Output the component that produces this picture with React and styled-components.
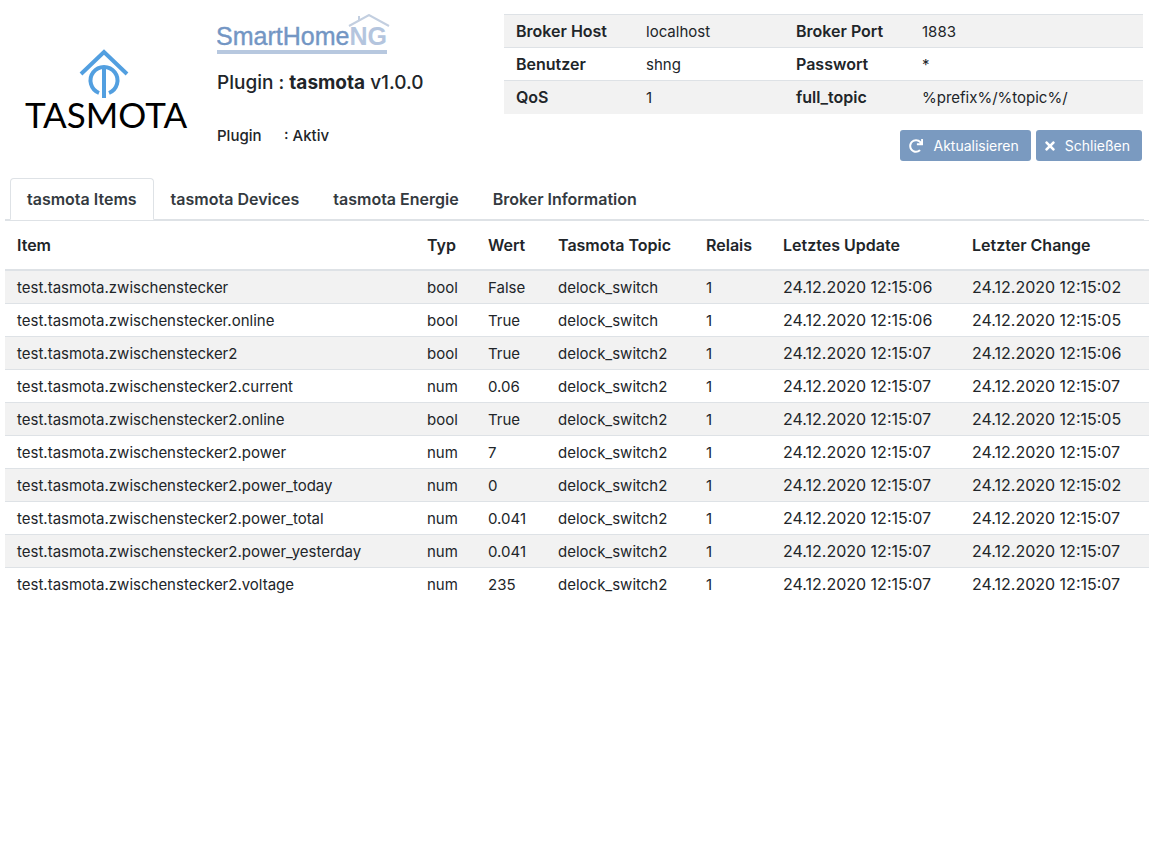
import React from "react";
import styled, { createGlobalStyle } from "styled-components";
import { FaRedo, FaTimes } from "react-icons/fa";

const GlobalStyle = createGlobalStyle`
  *, *::before, *::after { box-sizing: border-box; }
  body {
    margin: 0;
    background: #fff;
    color: #212529;
    font-family: Inter, "Liberation Sans", sans-serif;
    font-size: 15px;
    line-height: 24px;
  }
`;

const Header = styled.header`
  display: grid;
  grid-template-columns: 200px 287px minmax(0, 1fr);
  padding: 14px 9px 0 17px;
`;

const PluginLogo = styled.svg`
  display: block;
  width: 180px;
  height: 90px;
  margin-top: 32px;
`;

const BrandLogo = styled.svg`
  display: block;
  width: 180px;
  height: 44px;
`;

const Title = styled.h1`
  margin: 13px 0 0;
  font-size: 19px;
  line-height: 24px;
  font-weight: 500;
`;

const Status = styled.dl`
  display: flex;
  margin: 29px 0 0;
  font-weight: 500;
`;

const StatusLabel = styled.dt`
  width: 67px;
`;

const StatusValue = styled.dd`
  margin: 0;
`;

const Table = styled.table`
  width: 100%;
  table-layout: fixed;
  border-collapse: collapse;
  text-align: left;
`;

const Row = styled.tr`
  background: ${(p) => (p.$striped ? "#f2f2f2" : "#fff")};
`;

const Cell = styled.td`
  height: 33px;
  padding: 5px 12px 3px;
  border-top: 1px solid #dee2e6;
  white-space: nowrap;
`;

const DateCell = styled(Cell)`
  padding: 4px 12px;
  font-size: 16px;
`;

const LabelCell = styled(Cell)`
  padding: 4px 12px;
  font-size: 16px;
  font-weight: 600;
`;

const HeadCell = styled.th`
  padding: 12px;
  border-top: 1px solid #dee2e6;
  border-bottom: 2px solid #dee2e6;
  font-size: 16px;
  font-weight: 600;
  white-space: nowrap;
`;

const Actions = styled.div`
  display: flex;
  justify-content: flex-end;
  gap: 5px;
  margin: 16px 1px 0 0;
`;

const ActionButton = styled.button`
  display: flex;
  align-items: center;
  gap: 10px;
  height: 31px;
  padding: 1px 12px 0 9px;
  border: 0;
  border-radius: 3px;
  background: #7a9ac0;
  color: #fff;
  font: inherit;
  font-size: 14px;
  cursor: pointer;

  svg {
    width: ${(p) => p.$iconWidth}px;
    height: 14px;
  }
`;

const Tabs = styled.nav`
  display: flex;
  margin: 17px 8px 0 5px;
  padding-left: 5px;
  border-bottom: 1px solid #dee2e6;
`;

const Tab = styled.a`
  margin-bottom: -1px;
  padding: 8px 16px;
  border: 1px solid ${(p) => (p.$active ? "#dee2e6" : "transparent")};
  border-bottom-color: ${(p) => (p.$active ? "#fff" : "transparent")};
  border-radius: 4px 4px 0 0;
  color: #343a40;
  font-size: 16px;
  font-weight: 600;
  text-decoration: none;
`;

const Main = styled.main`
  padding: 0 3px 0 5px;
`;

const brokerRows = [
  ["Broker Host", "localhost", "Broker Port", "1883"],
  ["Benutzer", "shng", "Passwort", "*"],
  ["QoS", "1", "full_topic", "%prefix%/%topic%/"],
];

const tabs = ["tasmota Items", "tasmota Devices", "tasmota Energie", "Broker Information"];

const columns = [
  { label: "Item" },
  { label: "Typ", width: 61 },
  { label: "Wert", width: 70 },
  { label: "Tasmota Topic", width: 148 },
  { label: "Relais", width: 77 },
  { label: "Letztes Update", width: 189 },
  { label: "Letzter Change", width: 189 },
];

const day = "24.12.2020 ";
const items = [
  ["", "bool", "False", "delock_switch", "12:15:06", "12:15:02"],
  [".online", "bool", "True", "delock_switch", "12:15:06", "12:15:05"],
  ["2", "bool", "True", "delock_switch2", "12:15:07", "12:15:06"],
  ["2.current", "num", "0.06", "delock_switch2", "12:15:07", "12:15:07"],
  ["2.online", "bool", "True", "delock_switch2", "12:15:07", "12:15:05"],
  ["2.power", "num", "7", "delock_switch2", "12:15:07", "12:15:07"],
  ["2.power_today", "num", "0", "delock_switch2", "12:15:07", "12:15:02"],
  ["2.power_total", "num", "0.041", "delock_switch2", "12:15:07", "12:15:07"],
  ["2.power_yesterday", "num", "0.041", "delock_switch2", "12:15:07", "12:15:07"],
  ["2.voltage", "num", "235", "delock_switch2", "12:15:07", "12:15:07"],
].map(([suffix, type, value, topic, updated, changed]) => ({
  name: "test.tasmota.zwischenstecker" + suffix,
  type,
  value,
  topic,
  relay: "1",
  updated: day + updated,
  changed: day + changed,
}));

function TasmotaLogo() {
  return (
    <PluginLogo viewBox="0 0 180 90" role="img" aria-label="Tasmota">
      <g fill="none" stroke="#529fe0" strokeWidth="4">
        <path d="M64 28 L87 6 L110 28" />
        <path d="M82 47 A13.5 13.5 0 1 1 92 47" />
        <path d="M87 22 V52" />
      </g>
      <text
        x="89"
        y="82"
        textAnchor="middle"
        fontFamily="Lato, sans-serif"
        fontSize="35"
        fill="#000"
      >
        TASMOTA
      </text>
    </PluginLogo>
  );
}

function SmartHomeLogo() {
  return (
    <BrandLogo viewBox="0 0 180 44" role="img" aria-label="SmartHomeNG">
      <path d="M132 12 L152 1 L172 12 M142 6 V2" fill="none" stroke="#c3cfe0" strokeWidth="2" />
      <text
        x="-1"
        y="31"
        fontFamily="'Liberation Sans', Arial, sans-serif"
        fontSize="25"
        fill="#7396c4"
        stroke="#7396c4"
        strokeWidth="0.4"
      >
        SmartHome
        <tspan fontWeight="700" fill="#b4c5de" stroke="none">NG</tspan>
      </text>
      <rect x="0" y="36" width="170" height="4" fill="#b7c8df" />
    </BrandLogo>
  );
}

export default function App() {
  return (
    <>
      <GlobalStyle />
      <Header>
        <TasmotaLogo />
        <div>
          <SmartHomeLogo />
          <Title>
            Plugin : <strong>tasmota</strong> v1.0.0
          </Title>
          <Status>
            <StatusLabel>Plugin</StatusLabel>
            <StatusValue>: Aktiv</StatusValue>
          </Status>
        </div>
        <div>
          <Table>
            <colgroup>
              <col width="130" />
              <col width="150" />
              <col width="126" />
              <col />
            </colgroup>
            <tbody>
              {brokerRows.map((r, i) => (
                <Row key={r[0]} $striped={i % 2 === 0}>
                  <LabelCell as="th" scope="row">{r[0]}</LabelCell>
                  <Cell>{r[1]}</Cell>
                  <LabelCell as="th" scope="row">{r[2]}</LabelCell>
                  <Cell>{r[3]}</Cell>
                </Row>
              ))}
            </tbody>
          </Table>
          <Actions>
            <ActionButton type="button" $iconWidth={14}>
              <FaRedo /> Aktualisieren
            </ActionButton>
            <ActionButton type="button" $iconWidth={10}>
              <FaTimes /> Schließen
            </ActionButton>
          </Actions>
        </div>
      </Header>
      <Tabs>
        {tabs.map((t, i) => (
          <Tab key={t} href="#" $active={i === 0}>{t}</Tab>
        ))}
      </Tabs>
      <Main>
        <Table>
          <colgroup>
            {columns.map((c) => (
              <col key={c.label} width={c.width} />
            ))}
          </colgroup>
          <thead>
            <tr>
              {columns.map((c) => (
                <HeadCell key={c.label} scope="col">{c.label}</HeadCell>
              ))}
            </tr>
          </thead>
          <tbody>
            {items.map((item, i) => (
              <Row key={item.name} $striped={i % 2 === 0}>
                <Cell>{item.name}</Cell>
                <Cell>{item.type}</Cell>
                <Cell>{item.value}</Cell>
                <Cell>{item.topic}</Cell>
                <Cell>{item.relay}</Cell>
                <DateCell>{item.updated}</DateCell>
                <DateCell>{item.changed}</DateCell>
              </Row>
            ))}
          </tbody>
        </Table>
      </Main>
    </>
  );
}
